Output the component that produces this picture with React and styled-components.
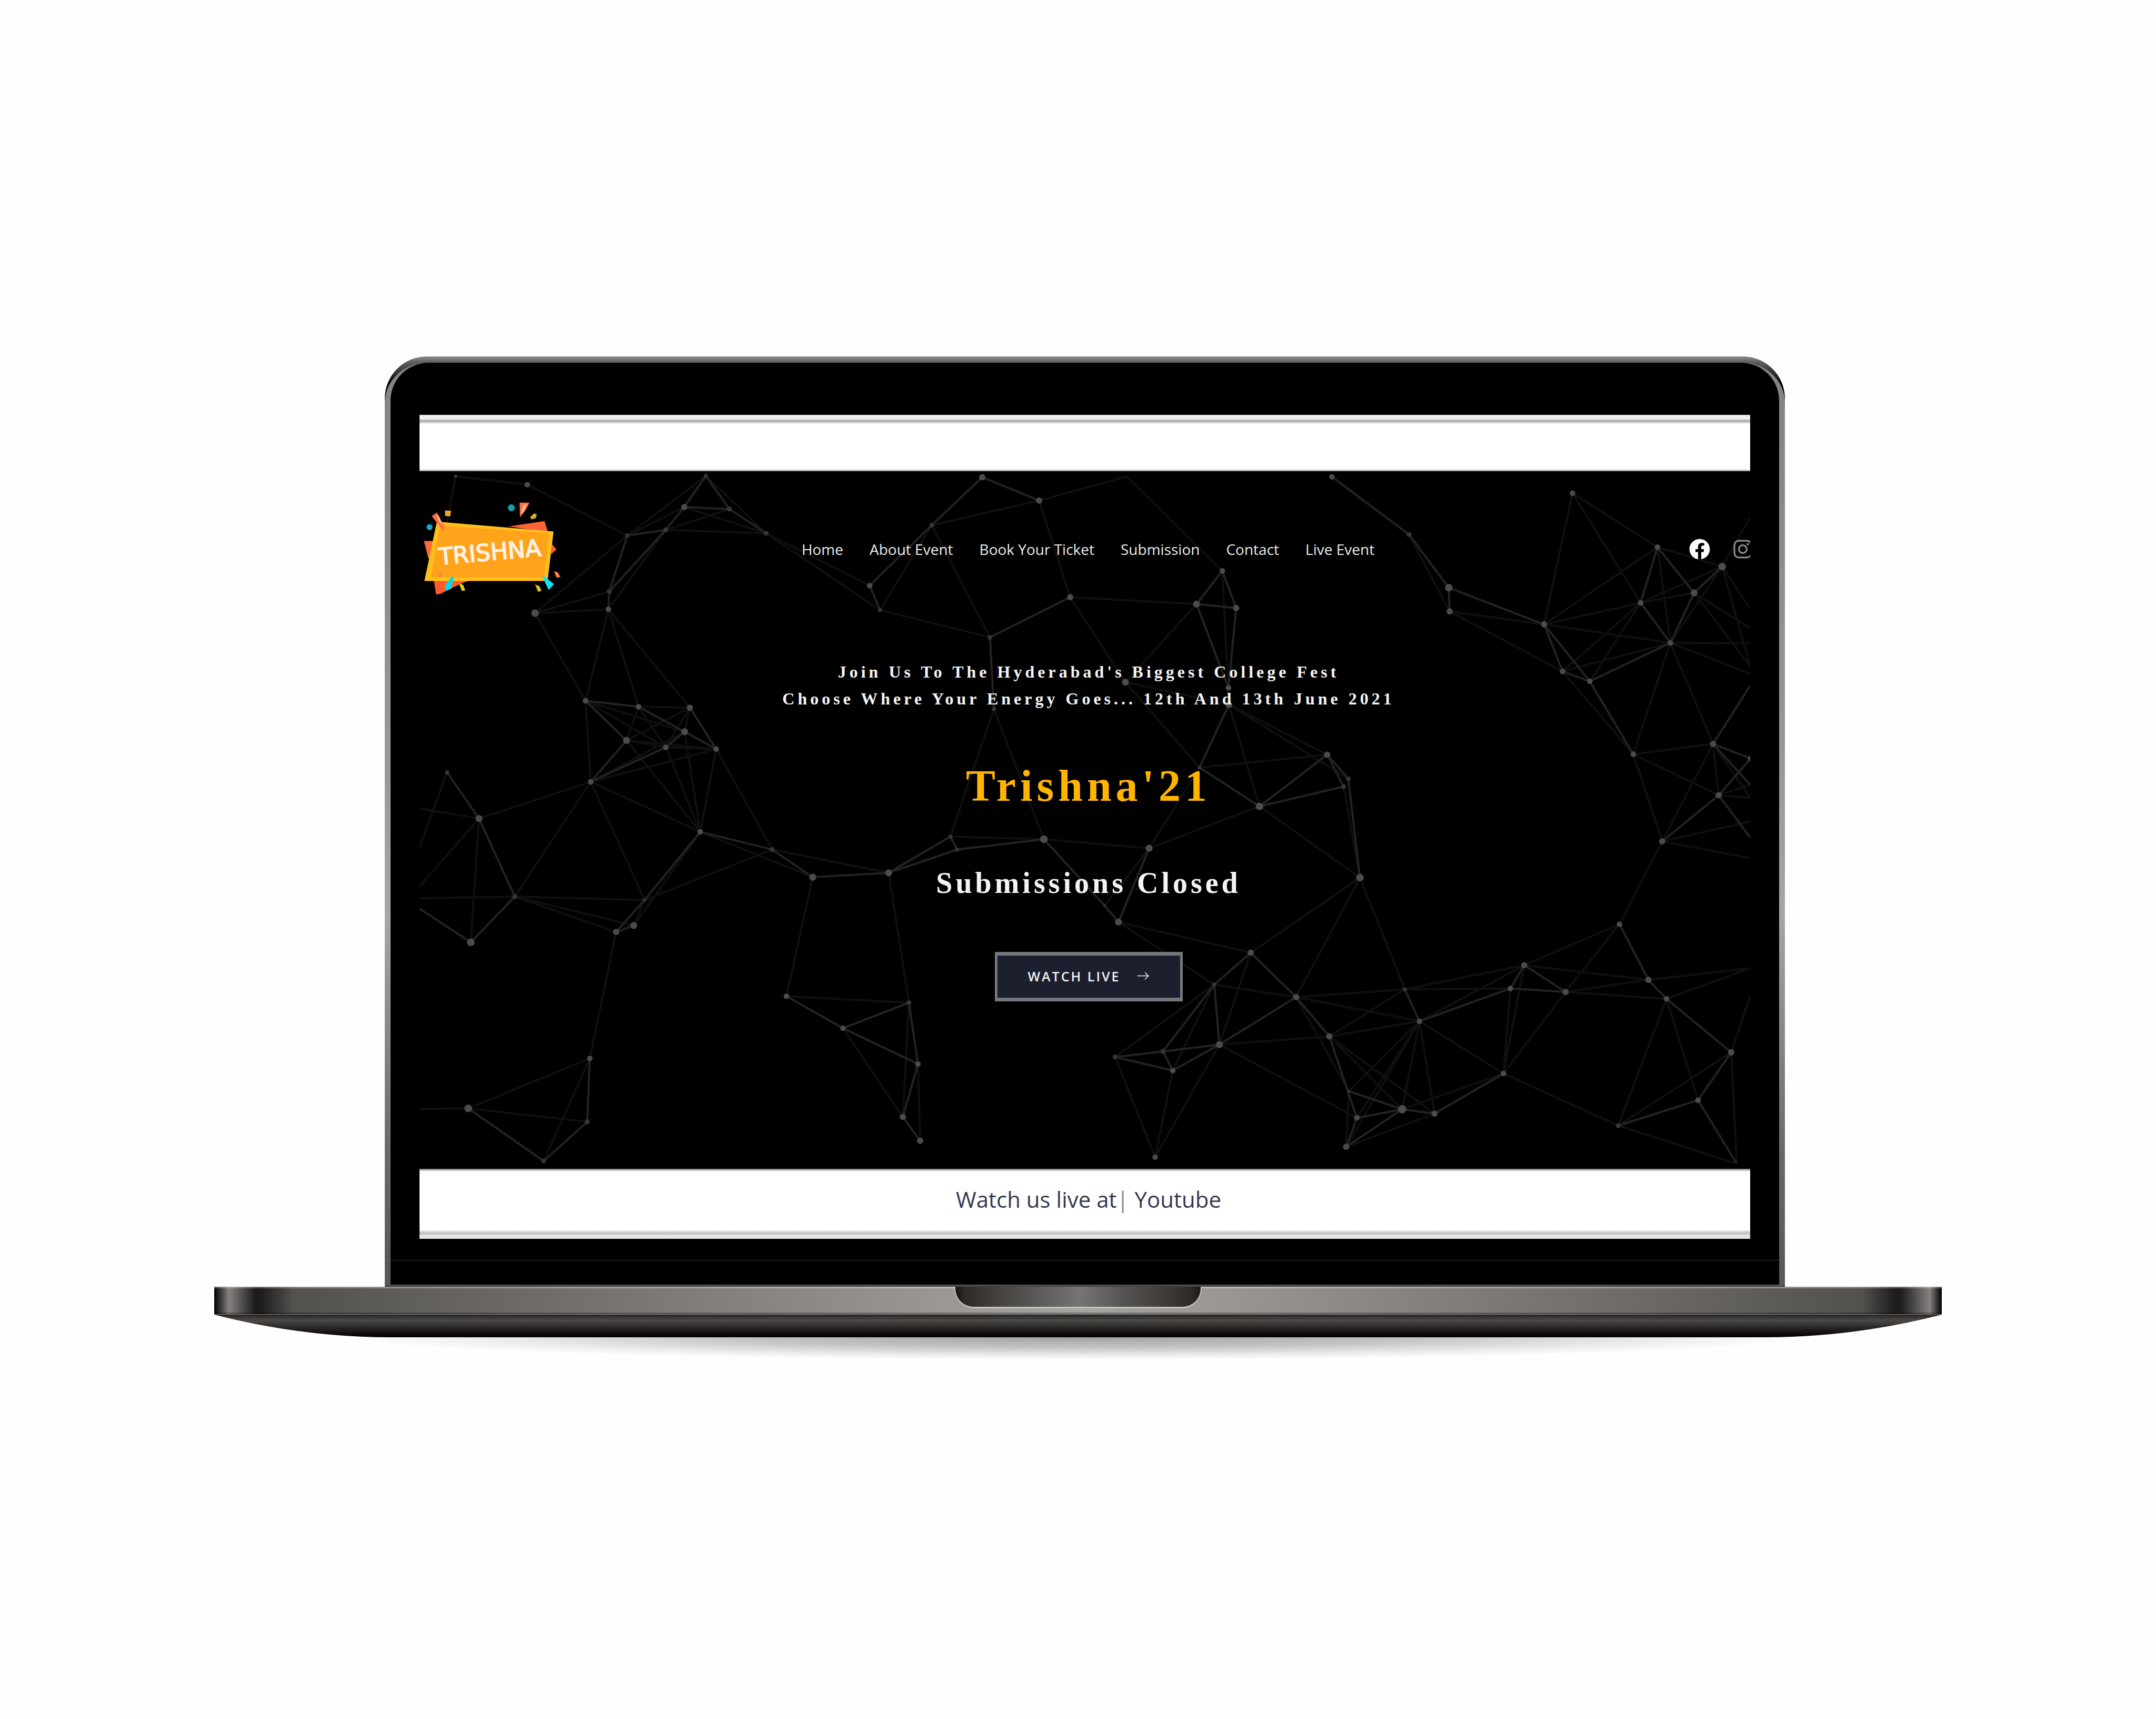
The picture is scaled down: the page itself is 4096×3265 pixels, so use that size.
import React from "react";
import styled, { createGlobalStyle } from "styled-components";
import { FaFacebook, FaInstagram } from "react-icons/fa";
import { BsArrowRight } from "react-icons/bs";

const sans = `"Open Sans", "Noto Sans", sans-serif`;
const serif = `"Liberation Serif", "Times New Roman", serif`;

const GlobalStyle = createGlobalStyle`
  *, *::before, *::after { box-sizing: border-box; }
  body { margin: 0; background: #fefefe; font-family: ${sans}; }
  h1, h2, p { margin: 0; }
`;

const Page = styled.main`
  display: flex;
  flex-direction: column;
  align-items: center;
  min-height: 100vh;
  padding-top: 677px;
`;

const Laptop = styled.div`
  width: 90%;
  max-width: 3282px;
`;

/* ---------- lid ---------- */

const Lid = styled.div`
  margin: 0 298px 0 324px;
  padding-top: 12px;
  border-radius: 80px 80px 0 0;
  background: linear-gradient(180deg, #8a8a8a 0, #5c5c5c 12px, #000 52px);
`;

const LidEdge = styled.div`
  padding: 0 11px;
  border-radius: 80px 80px 0 0 / 76px 76px 0 0;
  background: linear-gradient(180deg, #828282 0%, #9a9998 45%, #a6a6a4 60%, #6a6869 86%, #585657 100%);
`;

const Glass = styled.div`
  padding: 99px 55px 0;
  border-radius: 72px 72px 0 0;
  background: #000;
`;

const Chin = styled.div`
  height: 87px;
  margin: 0 -55px;
  padding-top: 40px;

  &::before {
    content: "";
    display: block;
    height: 1px;
    background: #333;
  }
`;

const Hinge = styled.div`
  height: 4px;
  margin: 0 298px 0 324px;
  background: #444;
  border-top: 1px solid #656565;
`;

/* ---------- base ---------- */

const Base = styled.div`
  display: flex;
  justify-content: center;
  align-items: flex-start;
  height: 53px;
  border-bottom: 1px solid #7c7a78;
  background:
    linear-gradient(0deg, rgba(0, 0, 0, 0.28) 0 3px, transparent 3px),
    linear-gradient(180deg, rgba(255, 255, 255, 0.3) 0 3px, transparent 3px),
    linear-gradient(90deg,
      #000 0, #868280 28px, #1c1a1b 78px, #1f1d1e 90px, #52514d 150px,
      #7a7573 24%, #98938f 40%, #a5a49f 50%, #98938f 60%, #7a7573 76%,
      #52514d calc(100% - 150px), #1f1d1e calc(100% - 90px), #1c1a1b calc(100% - 78px),
      #868280 calc(100% - 23px), #000 100%);
`;

const Notch = styled.div`
  width: 470px;
  height: 41px;
  border: 2px solid #c2c0be;
  border-top: 0;
  border-bottom-width: 3px;
  border-radius: 0 0 36px 36px / 0 0 38px 38px;
  background: linear-gradient(90deg, #151413 0, #2e2a29 18px, #575553 30%, #767472 51%, #575553 68%, #2e2a29 calc(100% - 18px), #1c1a1a 100%);
`;

const Underside = styled.svg`
  display: block;
  width: 100%;
  height: 43px;
`;

const Shadow = styled.div`
  height: 43px;
  margin: 0 254px;
  background: radial-gradient(ellipse 50% 100% at 50% 0, rgba(0, 0, 0, 0.36) 0%, rgba(0, 0, 0, 0.23) 45%, rgba(0, 0, 0, 0.07) 80%, transparent 100%);
`;

/* ---------- website ---------- */

const Screen = styled.div`
  overflow: hidden;
  background: #fff;
`;

const TopStrip = styled.div`
  height: 107px;
  background: linear-gradient(180deg, #eeeff0 0 9px, #b5b5b5 9px 13px, #fff 17px, #fff calc(100% - 4px), #999 100%);
`;

const Hero = styled.section`
  position: relative;
  overflow: hidden;
  background: #000;
  color: #f4f4f4;
`;

const Network = styled.svg`
  position: absolute;
  inset: 0;
  width: 100%;
  height: 100%;
`;

/* The site is slightly wider than the screen, so its right edge is cut off. */
const Site = styled.div`
  position: relative;
  width: calc(100% + 14px);
`;

const Header = styled.header`
  display: grid;
  grid-template-columns: 1fr auto 1fr;
  align-items: center;
  padding: 56px 8px 0 6px;
`;

const Logo = styled.svg`
  display: block;
  width: 265px;
  height: 184px;
`;

const Nav = styled.nav`
  display: flex;
  gap: 50px;
`;

const NavLink = styled.a`
  color: #ededed;
  font-size: 28px;
  line-height: 40px;
  font-weight: 500;
  text-decoration: none;
  white-space: nowrap;
`;

const Socials = styled.div`
  display: flex;
  justify-content: flex-end;
  gap: 42px;
`;

const SocialLink = styled.a`
  display: flex;
  color: ${(p) => (p.$dim ? "#8f8f8f" : "#fff")};
  font-size: 40px;
`;

const HeroBody = styled.div`
  display: flex;
  flex-direction: column;
  align-items: center;
  padding: 116px 0 318px;
  font-family: ${serif};
  text-align: center;
`;

const Tagline = styled.p`
  font-size: 32px;
  line-height: 51px;
  font-weight: 700;
  letter-spacing: 6px;
`;

const Title = styled.h1`
  margin-top: 90px;
  color: #ffb400;
  font-size: 84px;
  line-height: 100px;
  font-weight: 700;
  letter-spacing: 8px;
`;

const Status = styled.h2`
  margin-top: 100px;
  font-size: 56px;
  line-height: 68px;
  font-weight: 700;
  letter-spacing: 6px;
`;

const WatchButton = styled.button`
  display: flex;
  align-items: center;
  justify-content: center;
  gap: 30px;
  width: 357px;
  height: 94px;
  margin-top: 97px;
  padding-bottom: 4px;
  border: 6px solid #75777d;
  border-width: 7px 5px;
  background: #1b1f2e;
  color: #f2f2f2;
  font-family: ${sans};
  font-size: 25px;
  font-weight: 600;
  letter-spacing: 3px;
`;

const Footer = styled.footer`
  padding: 28px 0 45px;
  background: linear-gradient(180deg, #777 0, #fff 5px, #fff calc(100% - 17px), #c4c4c4 calc(100% - 12px), #c4c4c4 calc(100% - 8px), #e4e6e6 calc(100% - 8px), #e4e6e6 100%);
`;

const FooterText = styled.p`
  width: calc(100% + 14px);
  color: #35384f;
  font-size: 42px;
  line-height: 60px;
  font-weight: 500;
  text-align: center;
`;

const Caret = styled.span`
  color: #85879a;
`;

/* ---------- particle network data ---------- */

const nodes = {
  a1: [1057, 1105, 5], a2: [1223, 1124, 8], a3: [1637, 1104, 6], a4: [1587, 1176, 9], a5: [1692, 1181, 7],
  a6: [1777, 1237, 7], a7: [1455, 1242, 6], a8: [1544, 1229, 7], a9: [1413, 1372, 7], a10: [1411, 1413, 8],
  a11: [1241, 1422, 11], a12: [1358, 1625, 8], a13: [1481, 1639, 8], a14: [1600, 1641, 9],
  b1: [1588, 1697, 10], b2: [1453, 1717, 10], b3: [1544, 1733, 8], b4: [1661, 1737, 8], b5: [1370, 1813, 8],
  b6: [1037, 1791, 6], b7: [1111, 1898, 10], b8: [1194, 2079, 7], b9: [1092, 2185, 11], b10: [1624, 1929, 8],
  b11: [1791, 1970, 7], b12: [1885, 2034, 10], b13: [2061, 2024, 10], b14: [1495, 2087, 5], b15: [1470, 2146, 10],
  b16: [1429, 2161, 9], b17: [1368, 2454, 8], b18: [1086, 2570, 11], b19: [1362, 2601, 7], b20: [1261, 2692, 7],
  b21: [1824, 2310, 8], b22: [2108, 2325, 7], b23: [1955, 2384, 8], b24: [2129, 2467, 8], b25: [2094, 2590, 9],
  b26: [2134, 2645, 9],
  c1: [2278, 1107, 9], c2: [2410, 1161, 9], c3: [2161, 1218, 7], c4: [2613, 1105, 0], c5: [3089, 1106, 8],
  c6: [3268, 1240, 7], c7: [2017, 1358, 8], c8: [2041, 1415, 6], c9: [2296, 1478, 7], c10: [2482, 1385, 9],
  c11: [2835, 1324, 8], c12: [2775, 1401, 10], c13: [2867, 1410, 9], c14: [2610, 1582, 10], c15: [2849, 1595, 8],
  c16: [2305, 1644, 6], c17: [2850, 1634, 10],
  d1: [2782, 1780, 5], d2: [3078, 1750, 9], d3: [3127, 1806, 7], d4: [3116, 1824, 7], d5: [2921, 1870, 11],
  d6: [2665, 1967, 10], d7: [2421, 1946, 11], d8: [2204, 1940, 6], d9: [2220, 1970, 6], d10: [3154, 2035, 11],
  d11: [2594, 2138, 10], d12: [2562, 2100, 4],
  e1: [2901, 2209, 9], e2: [2816, 2283, 6], e3: [3006, 2312, 9], e4: [3258, 2294, 6], e5: [3292, 2368, 8],
  e6: [3083, 2403, 9], e7: [2828, 2422, 10], e8: [2697, 2438, 7], e9: [2586, 2451, 7], e10: [2720, 2482, 8],
  e11: [2679, 2683, 8], e12: [3147, 2592, 8], e13: [3128, 2530, 4], e14: [3252, 2572, 12], e15: [3327, 2582, 9],
  e16: [3122, 2659, 9], e17: [3487, 2489, 8], e18: [3503, 2292, 8], e19: [3535, 2238, 9], e20: [3631, 2300, 9],
  e21: [3756, 2143, 8], e22: [3823, 2272, 9], e23: [3865, 2316, 8], e24: [4015, 2440, 9], e25: [3938, 2551, 8],
  e26: [3753, 2610, 7], e27: [4028, 2698, 0],
  f1: [3647, 1144, 8], f2: [3844, 1269, 8], f3: [3994, 1314, 11], f4: [3929, 1375, 10], f5: [3805, 1398, 8],
  f6: [3874, 1491, 8], f7: [3581, 1448, 9], f8: [3624, 1557, 8], f9: [3687, 1580, 8], f10: [3360, 1363, 11],
  f11: [3362, 1418, 9], f12: [3973, 1725, 9], f13: [3788, 1749, 8], f14: [3855, 1951, 9], f15: [3986, 1844, 9],
  f16: [4060, 1759, 8],
  w1: [973, 2107, 0], w2: [973, 1965, 0], w3: [973, 2571, 0], w4: [973, 2083, 0], w5: [973, 1875, 0], w6: [973, 2055, 0],
  x1: [4059, 1412, 0], x2: [4059, 1457, 0], x3: [4059, 1492, 0], x4: [4059, 1545, 0], x5: [4059, 1562, 0],
  x6: [4059, 1590, 0], x7: [4059, 1820, 0], x8: [4059, 1850, 0], x9: [4059, 1942, 0], x10: [4059, 1990, 0],
  x11: [4059, 2245, 0], x12: [4059, 2310, 0], x13: [4059, 1200, 0], x14: [1033, 1230, 0], x16: [4059, 1905, 0],
};

const strongLinks = `a3-a4 a3-a5 a4-a8 a5-a6 a8-a9 a7-a9 a9-a10 a7-a8 a4-a5 a12-a13 a12-b2 a13-b1 b1-b4 b2-b5 a14-b4
  b3-b5 b3-b1 b6-b7 b7-b8 b8-b9 b9-w1 b10-b14 b14-b16 b15-b16 b10-b11 b11-b12 b13-d8 b12-b13 b17-b19 b19-b20 b18-b20
  b21-b23 b23-b24 b22-b24 b24-b25 b25-b26 b22-b23 c1-c3 c1-c2 c3-c7 c7-c8 c9-c10 c9-c16 c11-c12 c11-c13 c12-c13 c13-c15
  c5-c6 c6-f10 f10-f11 c12-c15 c17-d1 d2-d3 d2-d5 d2-d4 d4-d5 d3-d10 d6-d11 d7-d12 d12-d11 d8-d9 b13-d9 d1-d5 d7-d9
  e1-e3 e1-e2 e2-e8 e2-e7 e8-e9 e8-e10 e7-e10 e7-e8 e3-e6 e6-e12 e12-e16 e12-e14 e14-e15 e14-e16 e13-e14 e15-e17
  e4-e5 e18-e19 e19-e20 e21-e22 e22-e23 e23-e24 e24-e25 e25-e26 e25-e27 e5-e18 e18-e20 e9-e10 e3-e7
  f2-f4 f2-f5 f4-f6 f3-f4 f5-f6 f7-f8 f7-f9 f8-f9 f9-f6 f12-f16 f12-x7 f15-f16 f15-x9 f14-f15 f9-f13 f12-x6 f7-f10`.split(/\s+/);

const softLinks = `a1-a2 a1-x14 a2-a7 a3-a7 a3-a6 a4-a7 a5-a8 a6-a8 a4-a6 a7-a11 a9-a11 a10-a11 a8-a10 a11-a12 a10-a12 a10-a13
  a10-a14 a6-c7 a6-c8 a13-a14 a12-b1 a12-b3 a12-b5 a13-b2 a13-b3 a14-b2 a14-b1 a14-b3 b2-b3 b2-b4 b3-b4 b1-b5 b4-b5
  b5-b7 b5-b10 b5-b8 b5-b14 b3-b10 b1-b10 b2-b10 b4-b10 b4-b11 b6-w2 b7-w5 b7-w6 b7-b9 b8-w4 b8-b16 b8-b14 b8-b15
  b10-b12 b10-b15 b11-b14 b11-b13 b14-b15 b16-b17 b12-b21 b13-b22 b17-b18 b17-b20 b18-b19 b18-w3 b21-b22 b22-b25 b23-b25
  b24-b26 c2-c3 c2-c4 c2-c10 c3-c8 c3-c9 c4-c11 c8-c9 c10-c12 c10-c14 c12-c14 c11-c17 c14-c17 c14-d1 c16-d8 c16-d7
  c17-d2 c17-d3 c17-d5 d1-d2 d1-d6 d5-d6 d5-d10 d4-d10 d6-d7 d7-d8 d6-d12 d10-e1 d10-e3 d10-e4 d11-e1 d11-e2
  e1-e7 e2-e3 e2-e9 e2-e10 e3-e4 e3-e5 e3-e13 e4-e6 e5-e6 e6-e7 e6-e14 e5-e12 e5-e14 e5-e15 e5-e16 e5-e17 e4-e18
  e4-e19 e5-e19 e14-e17 e17-e18 e17-e19 e17-e20 e17-e26 e19-e21 e20-e21 e20-e22 e20-e23 e19-e22 e22-x11 e23-x11
  e23-e25 e23-e26 e24-x12 e24-e27 e24-e26 e26-e27 e9-e11 e10-e11 e7-e11 e7-e12 e15-e16 e6-e15 e13-e16 e13-e5
  f1-f2 f1-f5 f1-f7 f2-f3 f3-f5 f4-f5 f3-f6 f2-f6 f2-f7 f5-f7 f5-f8 f5-f9 f6-f7 f6-f8 f6-f12 f6-f13 f6-x3 f6-x5
  f3-x1 f4-x2 f4-x4 f3-x4 f12-f13 f12-f14 f12-f15 f13-f15 f13-f14 f8-f13 f14-x10 f14-x16 f14-e21 f15-x7
  f15-x8 f11-f7 f11-f8 c6-f11 f3-x13 f12-x8`.split(/\s+/);

const toPath = (links) =>
  links
    .map((link) => {
      const [from, to] = link.split("-").map((id) => nodes[id]);
      return `M${from[0]} ${from[1]}L${to[0]} ${to[1]}`;
    })
    .join("");

const navItems = ["Home", "About Event", "Book Your Ticket", "Submission", "Contact", "Live Event"];

function ParticleNetwork() {
  return (
    <Network viewBox="973 1093 3086 1617" preserveAspectRatio="none" aria-hidden="true">
      <path d={toPath(softLinks)} fill="none" stroke="#0f0f0f" strokeWidth="5" />
      <path d={toPath(strongLinks)} fill="none" stroke="#222" strokeWidth="5" />
      {Object.entries(nodes).map(([id, [x, y, r]]) => (
        <circle key={id} cx={x} cy={y} r={r * 0.8} fill={r > 7 ? "#4c4c4c" : "#363636"} />
      ))}
    </Network>
  );
}

function TrishnaLogo() {
  return (
    <Logo viewBox="980 1162 324 224" role="img" aria-label="Trishna">
      <path d="M983 1255h30v40h-20z" fill="#ff6a3a" />
      <path d="M1180 1221l83-12 8 26z" fill="#ff6338" />
      <path d="M1280 1262l11 13-13 11z" fill="#ff5a34" />
      <path d="M1005 1340h100l-40 16-44 22-10 1z" fill="#ff5a30" />
      <path d="M1013 1210L1284 1233L1270 1348L984 1348Z" fill="#ffc01c" />
      <path d="M1020 1219L1274 1237L1262 1340L999 1340Z" fill="#ffa31b" />
      <path d="M1001 1197l12-8 18 34-4 8z" fill="#ff6e42" />
      <path d="M1012 1194l5 2 9 22-8-8z" fill="#ffc29a" />
      <path d="M1205 1166h23l-8 16-14 18z" fill="#ff6e4c" />
      <path d="M1213 1173l9-4-7 17-7 8z" fill="#ffbf92" />
      <path d="M1032 1184l14 1-2 13-12-1z" fill="#e8ab1f" />
      <path d="M1230 1199l9-8 6 2-2 9-11 3z" fill="#d8ac24" />
      <circle cx="1186" cy="1178" r="8" fill="#14a0a8" />
      <circle cx="996" cy="1223" r="7" fill="#0ea6c4" />
      <path d="M1048 1337l4 2-6 27-12 5-2-12z" fill="#00dcf6" />
      <path d="M1257 1333l28 22-12 14-8-16z" fill="#12e2f2" />
      <path d="M1064 1353l10 4 5 13-8 1z" fill="#d8d31c" />
      <path d="M1241 1356l10 4 5 11-8 2z" fill="#e0c41c" />
      <path d="M1285 1325l9 3 6 11-9 1z" fill="#ff8452" />
      <circle cx="1021" cy="1333" r="5" fill="#ff8a4c" />
      <text
        x="1136"
        y="1300"
        textAnchor="middle"
        transform="rotate(-5 1136 1282)"
        fill="#fff1e6"
        stroke="#fff1e6"
        strokeWidth="2"
        fontFamily="'DejaVu Sans', sans-serif"
        fontSize="54"
      >
        TRISHNA
      </text>
    </Logo>
  );
}

export default function App() {
  return (
    <>
      <GlobalStyle />
      <Page>
        <Laptop>
          <Lid>
            <LidEdge>
              <Glass>
                <Screen>
                  <TopStrip />
                  <Hero>
                    <ParticleNetwork />
                    <Site>
                      <Header>
                        <TrishnaLogo />
                        <Nav>
                          {navItems.map((item) => (
                            <NavLink href="#" key={item}>{item}</NavLink>
                          ))}
                        </Nav>
                        <Socials>
                          <SocialLink href="#" aria-label="Facebook"><FaFacebook /></SocialLink>
                          <SocialLink href="#" aria-label="Instagram" $dim><FaInstagram /></SocialLink>
                        </Socials>
                      </Header>
                      <HeroBody>
                        <Tagline>
                          Join Us To The Hyderabad's Biggest College Fest
                          <br />
                          Choose Where Your Energy Goes... 12th And 13th June 2021
                        </Tagline>
                        <Title>Trishna'21</Title>
                        <Status>Submissions Closed</Status>
                        <WatchButton type="button">
                          WATCH LIVE
                          <BsArrowRight aria-hidden="true" />
                        </WatchButton>
                      </HeroBody>
                    </Site>
                  </Hero>
                  <Footer>
                    <FooterText>
                      Watch us live at<Caret>|</Caret> Youtube
                    </FooterText>
                  </Footer>
                </Screen>
                <Chin />
              </Glass>
            </LidEdge>
          </Lid>
          <Hinge />
          <Base>
            <Notch />
          </Base>
          <Underside viewBox="0 0 4006 53" preserveAspectRatio="none" aria-hidden="true">
            <defs>
              <linearGradient id="underside" x1="0" y1="0" x2="0" y2="1">
                <stop offset="0" stopColor="#262625" />
                <stop offset="0.25" stopColor="#4c4846" />
                <stop offset="0.5" stopColor="#302e2c" />
                <stop offset="0.8" stopColor="#131111" />
                <stop offset="1" stopColor="#000" />
              </linearGradient>
            </defs>
            <path d="M0 0H4006Q3802 53 3594 53H412Q204 53 0 0Z" fill="url(#underside)" />
          </Underside>
          <Shadow />
        </Laptop>
      </Page>
    </>
  );
}
